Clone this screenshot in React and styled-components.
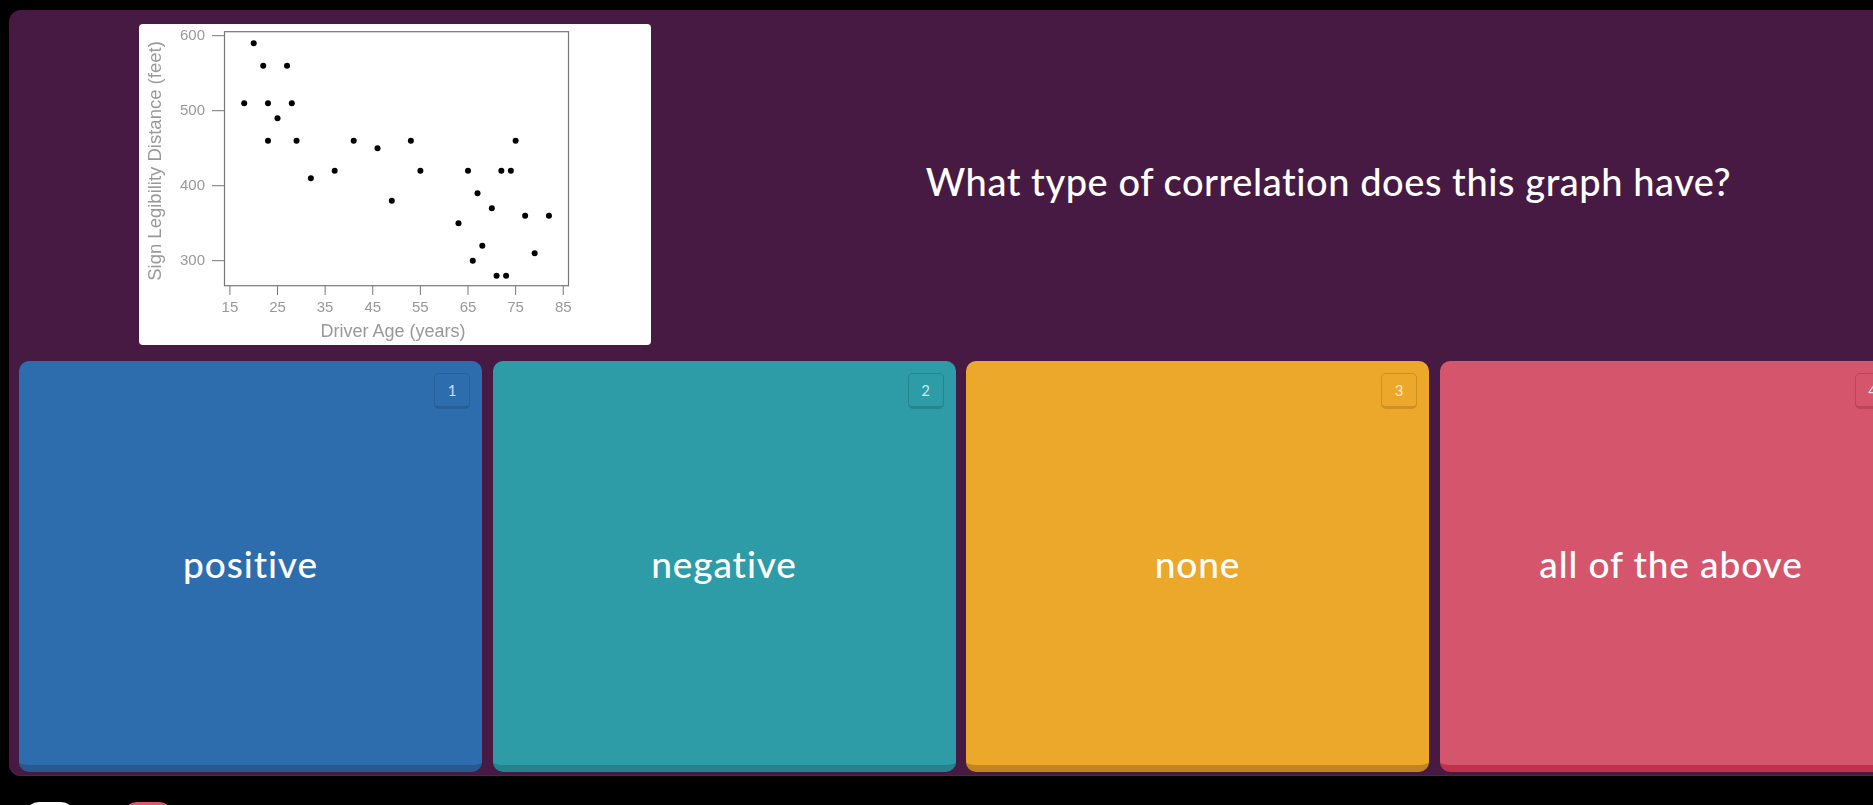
import styled, { createGlobalStyle } from 'styled-components';

const GlobalStyle = createGlobalStyle`
  html, body {
    margin: 0;
    height: 805px;
    overflow: hidden;
    background: #000;
  }
`;

const Page = styled.div`
  width: 1873px;
  height: 805px;
  overflow: hidden;
  padding: 10px 0 0 9px;
  box-sizing: border-box;
  font-family: "Lato", "Noto Sans", sans-serif;
  color: #fff;
`;

const Panel = styled.div`
  width: 1904px;
  height: 766px;
  box-sizing: border-box;
  padding: 14px 0 0 10px;
  background: #461a42;
  border-radius: 12px;
  box-shadow: inset 0 -1px 0 #5a1f55;
`;

const QuestionRow = styled.div`
  display: grid;
  grid-template-columns: 725px 1fr;
  height: 337px;
`;

const ChartCard = styled.div`
  width: 512px;
  height: 321px;
  margin-left: 120px;
  background: #fff;
  border-radius: 4px;
`;

const ChartSvg = styled.svg`
  display: block;
  filter: blur(0.5px);
`;

const QuestionText = styled.div`
  align-self: center;
  text-align: center;
  font-size: 38px;
  font-weight: 500;
  letter-spacing: 0.55px;
  padding-bottom: 23px;
`;

const Options = styled.div`
  display: grid;
  grid-template-columns: repeat(4, 463px);
  column-gap: 10.5px;
`;

const OptionCard = styled.div`
  position: relative;
  height: 411px;
  box-sizing: border-box;
  display: flex;
  align-items: center;
  justify-content: center;
  background: ${(p) => p.$bg};
  border-bottom: 7px solid ${(p) => p.$edge};
  border-radius: 10px;
  font-size: 37px;
  font-weight: 500;
  letter-spacing: 0.9px;
`;

const KeyBadge = styled.div`
  position: absolute;
  top: 12px;
  right: 12px;
  width: 36px;
  height: 36px;
  box-sizing: border-box;
  display: flex;
  align-items: center;
  justify-content: center;
  border: 1px solid ${(p) => p.$edge};
  border-bottom-width: 3px;
  border-radius: 5px;
  font-size: 15px;
  font-weight: 400;
  letter-spacing: 0;
  color: rgba(255, 255, 255, 0.78);
`;

const Footer = styled.div`
  display: flex;
  gap: 48px;
  padding: 26px 0 0 16px;
`;

const RoundButton = styled.div`
  width: 50px;
  height: 50px;
  border-radius: 14px;
  background: ${(p) => p.$bg};
`;

const options = [
  { label: 'positive', bg: '#2e6dad', edge: '#265a8c', badge: '#28619a' },
  { label: 'negative', bg: '#2d9ca7', edge: '#25818a', badge: '#26868f' },
  { label: 'none', bg: '#eca82b', edge: '#c2851d', badge: '#cf9020' },
  { label: 'all of the above', bg: '#d5566c', edge: '#c3304a', badge: '#bd4459' },
];

const points = [
  [18, 510], [20, 590], [22, 560], [23, 510], [23, 460], [25, 490], [27, 560], [28, 510],
  [29, 460], [32, 410], [37, 420], [41, 460], [46, 450], [49, 380], [53, 460], [55, 420],
  [63, 350], [65, 420], [66, 300], [67, 390], [68, 320], [70, 370], [71, 280], [72, 420],
  [73, 280], [74, 420], [75, 460], [77, 360], [79, 310], [82, 360],
];

const xPos = (age) => 90.9 + (age - 15) * 4.762;
const yPos = (dist) => 11.7 + (600 - dist) * 0.75;

const axisColor = '#777';
const labelColor = '#999';

function Chart() {
  return (
    <ChartSvg width="512" height="321" viewBox="0 0 512 321">
      <rect x="85.5" y="7.7" width="344" height="254" fill="none" stroke={axisColor} strokeWidth="1.2" />
      {[600, 500, 400, 300].map((v) => (
        <g key={v}>
          <line x1="73" x2="85" y1={yPos(v)} y2={yPos(v)} stroke={axisColor} />
          <text x="66" y={yPos(v) + 4.5} textAnchor="end" fontSize="15" fill={labelColor} fontFamily="Liberation Sans">{v}</text>
        </g>
      ))}
      {[15, 25, 35, 45, 55, 65, 75, 85].map((v) => (
        <g key={v}>
          <line x1={xPos(v)} x2={xPos(v)} y1="262" y2="271" stroke={axisColor} />
          <text x={xPos(v)} y="288" textAnchor="middle" fontSize="15" fill={labelColor} fontFamily="Liberation Sans">{v}</text>
        </g>
      ))}
      <text x="254" y="313" textAnchor="middle" fontSize="18" fill={labelColor} fontFamily="Liberation Sans">Driver Age (years)</text>
      <text transform="translate(22 137) rotate(-90)" textAnchor="middle" fontSize="18.5" fill={labelColor} fontFamily="Liberation Sans">Sign Legibility Distance (feet)</text>
      {points.map(([a, d], i) => (
        <circle key={i} cx={xPos(a)} cy={yPos(d)} r="3" fill="#000" />
      ))}
    </ChartSvg>
  );
}

export default function App() {
  return (
    <Page>
      <GlobalStyle />
      <Panel>
        <QuestionRow>
          <ChartCard>
            <Chart />
          </ChartCard>
          <QuestionText>What type of correlation does this graph have?</QuestionText>
        </QuestionRow>
        <Options>
          {options.map((o, i) => (
            <OptionCard key={o.label} $bg={o.bg} $edge={o.edge}>
              <KeyBadge $edge={o.badge}>{i + 1}</KeyBadge>
              {o.label}
            </OptionCard>
          ))}
        </Options>
      </Panel>
      <Footer>
        <RoundButton $bg="#fff" />
        <RoundButton $bg="#e0566f" />
      </Footer>
    </Page>
  );
}
